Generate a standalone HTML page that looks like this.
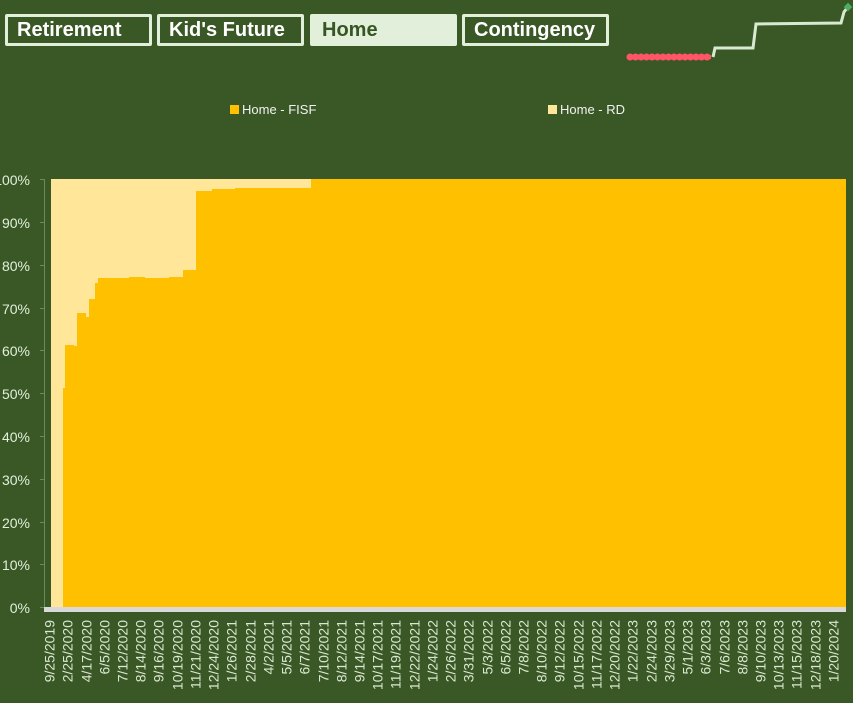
<!DOCTYPE html>
<html><head><meta charset="utf-8"><style>
body{margin:0;width:853px;height:703px;background:#3a5726;overflow:hidden;position:relative;font-family:"Liberation Sans",sans-serif}
.tab{position:absolute;top:14px;height:32px;width:147px;border:3px solid #e2efda;border-radius:2px;color:#fff;font-weight:bold;font-size:20px;line-height:27px;padding-left:9px;box-sizing:border-box}
.lg{position:absolute;top:102px;color:#f2f2f2;font-size:13px}
.lg i{display:inline-block;width:9px;height:9px;margin-right:3px;vertical-align:0px}
.yl{position:absolute;right:823px;color:#e2efda;font-size:14px;line-height:14px}
.xl{position:absolute;top:620px;white-space:nowrap;color:#d9e8cf;font-size:14px;line-height:15px;transform-origin:0 0;transform:rotate(-90deg) translate(-100%,-50%)}
</style></head><body>
<div class="tab" style="left:5px">Retirement</div>
<div class="tab" style="left:157px">Kid's Future</div>
<div class="tab" style="left:310px;background:#e2efda;color:#375623">Home</div>
<div class="tab" style="left:462px">Contingency</div>
<div class="lg" style="left:230px"><i style="background:#ffc000"></i>Home - FISF</div>
<div class="lg" style="left:548px"><i style="background:#ffe699"></i>Home - RD</div>
<svg width="853" height="703" style="position:absolute;left:0;top:0">
<line x1="630" y1="57" x2="711" y2="57" stroke="#ff5566" stroke-width="7" stroke-dasharray="0.1 5.4" stroke-linecap="round"/>
<line x1="630" y1="57" x2="711" y2="57" stroke="#ff5566" stroke-width="4"/>
<polyline points="713,57 715,48 753,48 756,24 841,23 844,12 848,7" fill="none" stroke="#d9ead3" stroke-width="3"/>
<rect x="845" y="4" width="6" height="6" fill="#4caf63" transform="rotate(45 848 7)"/>
<line x1="44.5" y1="179" x2="44.5" y2="608" stroke="#6b8a58" stroke-width="1"/>
<g stroke="#6b8a58"><line x1="40" x2="45" y1="179.5" y2="179.5"/><line x1="40" x2="45" y1="222.5" y2="222.5"/><line x1="40" x2="45" y1="265.5" y2="265.5"/><line x1="40" x2="45" y1="308.5" y2="308.5"/><line x1="40" x2="45" y1="350.5" y2="350.5"/><line x1="40" x2="45" y1="393.5" y2="393.5"/><line x1="40" x2="45" y1="436.5" y2="436.5"/><line x1="40" x2="45" y1="479.5" y2="479.5"/><line x1="40" x2="45" y1="522.5" y2="522.5"/><line x1="40" x2="45" y1="564.5" y2="564.5"/><line x1="40" x2="45" y1="607.5" y2="607.5"/></g>
<rect x="51" y="179" width="795" height="428" fill="#ffe699"/>
<polygon fill="#ffc000" points="63,607 63,388 65,388 65,345 74,345 74,346 77,346 77,313 86,313 86,317 89,317 89,299 95,299 95,283 98,283 98,278 129,278 129,277 145,277 145,278 169,278 169,277 183,277 183,270 196,270 196,191 212,191 212,189 235,189 235,188 311,188 311,179 846,179 846,607"/>
<rect x="44" y="607" width="802" height="5" fill="#d9d9d9"/>
</svg>
<div class="yl" style="top:173px">100%</div>
<div class="yl" style="top:216px">90%</div>
<div class="yl" style="top:259px">80%</div>
<div class="yl" style="top:302px">70%</div>
<div class="yl" style="top:344px">60%</div>
<div class="yl" style="top:387px">50%</div>
<div class="yl" style="top:430px">40%</div>
<div class="yl" style="top:473px">30%</div>
<div class="yl" style="top:516px">20%</div>
<div class="yl" style="top:558px">10%</div>
<div class="yl" style="top:601px">0%</div>
<div class="xl" style="left:50px">9/25/2019</div>
<div class="xl" style="left:68px">2/25/2020</div>
<div class="xl" style="left:86.5px">4/17/2020</div>
<div class="xl" style="left:104.7px">6/5/2020</div>
<div class="xl" style="left:122.9px">7/12/2020</div>
<div class="xl" style="left:141.2px">8/14/2020</div>
<div class="xl" style="left:159.4px">9/16/2020</div>
<div class="xl" style="left:177.6px">10/19/2020</div>
<div class="xl" style="left:195.8px">11/21/2020</div>
<div class="xl" style="left:214.1px">12/24/2020</div>
<div class="xl" style="left:232.3px">1/26/2021</div>
<div class="xl" style="left:250.5px">2/28/2021</div>
<div class="xl" style="left:268.8px">4/2/2021</div>
<div class="xl" style="left:287px">5/5/2021</div>
<div class="xl" style="left:305.2px">6/7/2021</div>
<div class="xl" style="left:323.5px">7/10/2021</div>
<div class="xl" style="left:341.7px">8/12/2021</div>
<div class="xl" style="left:359.9px">9/14/2021</div>
<div class="xl" style="left:378.1px">10/17/2021</div>
<div class="xl" style="left:396.4px">11/19/2021</div>
<div class="xl" style="left:414.6px">12/22/2021</div>
<div class="xl" style="left:432.8px">1/24/2022</div>
<div class="xl" style="left:451.1px">2/26/2022</div>
<div class="xl" style="left:469.3px">3/31/2022</div>
<div class="xl" style="left:487.5px">5/3/2022</div>
<div class="xl" style="left:505.8px">6/5/2022</div>
<div class="xl" style="left:524px">7/8/2022</div>
<div class="xl" style="left:542.2px">8/10/2022</div>
<div class="xl" style="left:560.4px">9/12/2022</div>
<div class="xl" style="left:578.7px">10/15/2022</div>
<div class="xl" style="left:596.9px">11/17/2022</div>
<div class="xl" style="left:615.1px">12/20/2022</div>
<div class="xl" style="left:633.4px">1/22/2023</div>
<div class="xl" style="left:651.6px">2/24/2023</div>
<div class="xl" style="left:669.8px">3/29/2023</div>
<div class="xl" style="left:688.1px">5/1/2023</div>
<div class="xl" style="left:706.3px">6/3/2023</div>
<div class="xl" style="left:724.5px">7/6/2023</div>
<div class="xl" style="left:742.7px">8/8/2023</div>
<div class="xl" style="left:761px">9/10/2023</div>
<div class="xl" style="left:779.2px">10/13/2023</div>
<div class="xl" style="left:797.4px">11/15/2023</div>
<div class="xl" style="left:815.7px">12/18/2023</div>
<div class="xl" style="left:833.9px">1/20/2024</div>
</body></html>
